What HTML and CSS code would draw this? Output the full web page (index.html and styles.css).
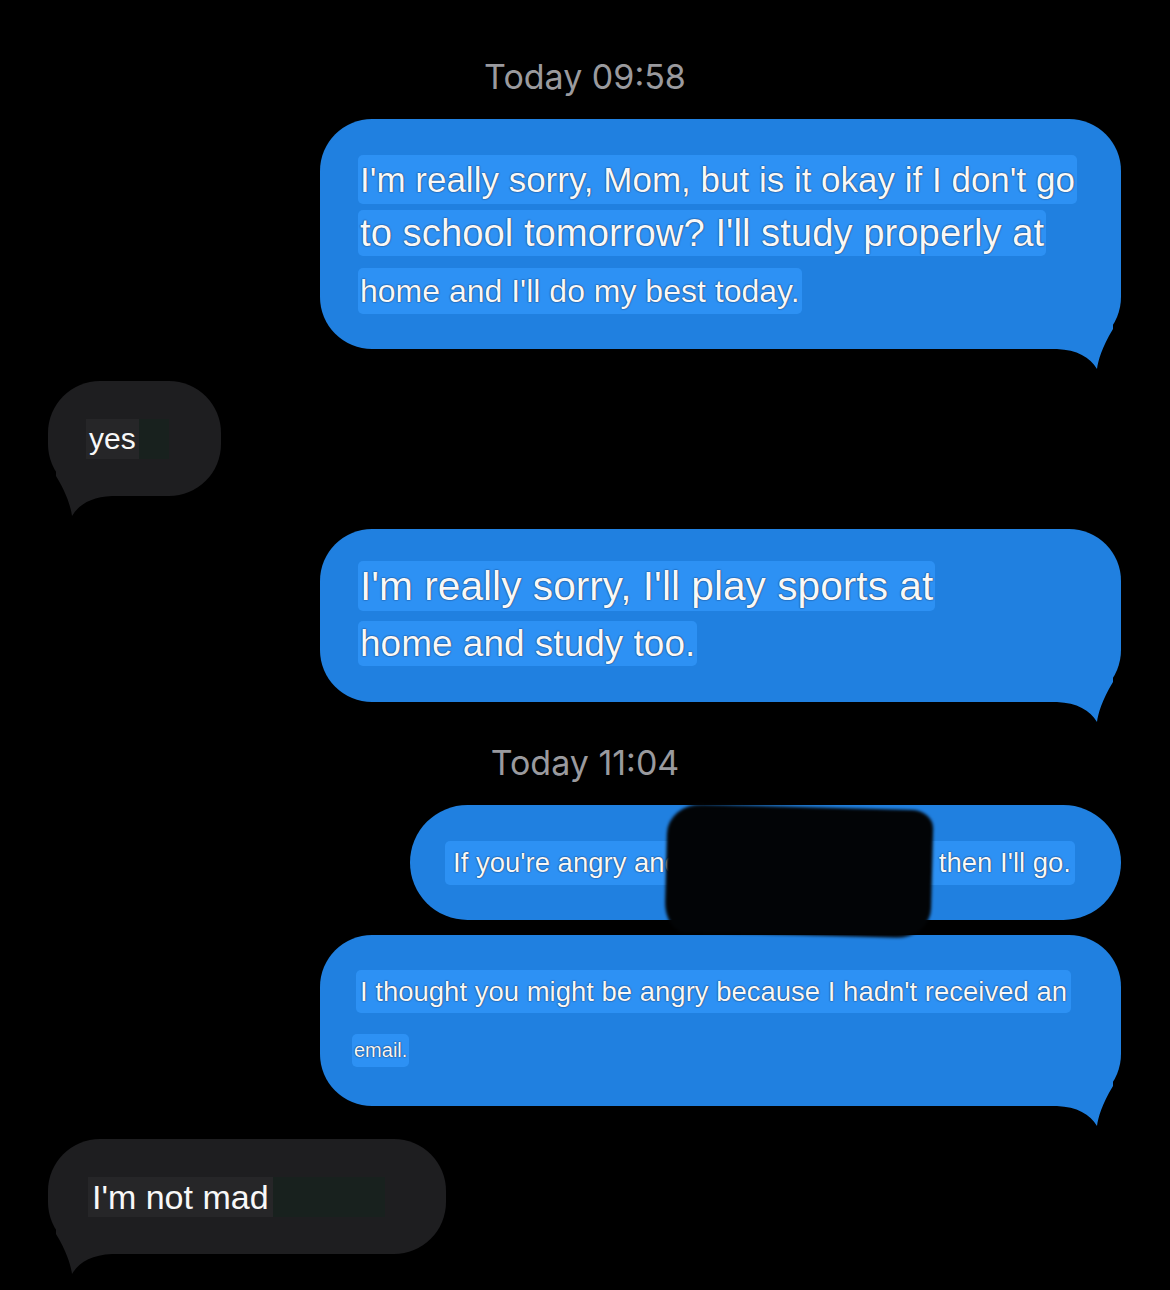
FILE: index.html
```html
<!DOCTYPE html>
<html lang="en">
<head>
    <meta charset="UTF-8">
    <meta name="viewport" content="width=device-width, initial-scale=1.0">
    <title>Messages</title>
    <link rel="stylesheet" href="styles.css">
</head>
<body>
    <div class="thread">
        <div class="stamp stamp-first">Today 09:58</div>

        <div class="row out">
            <div class="bubble blue tail b-first">
                <span class="hl l1">I'm really sorry, Mom, but is it okay if I don't go</span>
                <span class="hl l2">to school tomorrow? I'll study properly at</span>
                <span class="hl l3">home and I'll do my best today.</span>
            </div>
        </div>

        <div class="row in r-yes">
            <div class="bubble gray tail b-short">
                <span class="hl-dark">yes</span><span class="hl-ghost ghost-yes"></span>
            </div>
        </div>

        <div class="row out r-sports">
            <div class="bubble blue tail b-sports">
                <span class="hl s1">I'm really sorry, I'll play sports at</span>
                <span class="hl s2">home and study too.</span>
            </div>
        </div>

        <div class="stamp stamp-second">Today 11:04</div>

        <div class="row out r-angry">
            <div class="bubble blue b-angry">
                <span class="hl a1"><span>If you're angry and</span><span>, then I'll go.</span></span>
                <!-- redacted with a marker -->
                <div class="redact"></div>
            </div>
        </div>

        <div class="row out r-email">
            <div class="bubble blue tail b-email">
                <span class="hl e1">I thought you might be angry because I hadn't received an</span>
                <span class="hl e2">email.</span>
            </div>
        </div>

        <div class="row in r-mad">
            <div class="bubble gray tail b-mad">
                <span class="hl-dark mad">I'm not mad</span><span class="hl-ghost ghost-mad"></span>
            </div>
        </div>
    </div>
</body>
</html>
```

FILE: styles.css
```css
* {
    margin: 0;
    padding: 0;
    box-sizing: border-box;
}

body {
    background: #000;
    width: 1170px;
    height: 1290px;
    overflow: hidden;
    font-family: 'Liberation Sans', Arial, sans-serif;
    color: #f8f8f8;
}

.thread {
    display: flex;
    flex-direction: column;
}

/* horodatage */
.stamp {
    font-family: Inter, 'Liberation Sans', sans-serif;
    font-size: 34px;
    line-height: 40px;
    color: #9a9a9e;
    text-align: center;
}
.stamp-first { margin-top: 57px; }
.stamp-second { margin-top: 41px; }

.row {
    display: flex;
}
.row.out {
    justify-content: flex-end;
    padding-right: 49px;
}
.row.in {
    justify-content: flex-start;
    padding-left: 48px;
}

.bubble {
    position: relative;
    display: flex;
    flex-direction: column;
    align-items: flex-start;
    border-radius: 52px;
}
.blue { background: #2080e0; }
.gray { background: #1e1e20; }

/* queue de la bulle */
.out .tail::after {
    content: "";
    position: absolute;
    right: 0;
    bottom: -20px;
    width: 64px;
    height: 50px;
    background: inherit;
    clip-path: path('M0 0 L0 30 C20 31 33 38 40 50 C41 42 45 28 56 10 L56 0 Z');
}
.in .tail::after {
    content: "";
    position: absolute;
    left: 0;
    bottom: -20px;
    width: 64px;
    height: 50px;
    background: inherit;
    clip-path: path('M64 0 L64 30 C44 31 31 38 24 50 C23 42 19 28 8 10 L8 0 Z');
}

.hl {
    display: block;
    background: #2d91f4;
    border-radius: 5px;
    padding: 0 2px;
    white-space: nowrap;
    text-shadow: 0 0 1px rgba(0, 10, 40, 0.8), 0 0 2px rgba(0, 10, 40, 0.45);
}

/* premier message */
.b-first {
    width: 801px;
    height: 230px;
    margin-top: 22px;
    padding: 36px 0 0 38px;
}
.l1 { font-size: 35px; line-height: 49px; }
.l2 { font-size: 38.3px; line-height: 46px; margin-top: 6px; }
.l3 { font-size: 32px; line-height: 46px; margin-top: 12px; }

/* reponses de maman */
.b-short {
    width: 173px;
    height: 115px;
    flex-direction: row;
    align-items: center;
    padding-left: 38px;
}
.r-yes { margin-top: 32px; }

.hl-dark {
    font-size: 30px;
    line-height: 40px;
    background: #262628;
    padding: 0 3px;
}
.hl-ghost {
    display: block;
    height: 40px;
    background: #18211e;
}
.ghost-yes { width: 30px; }

.r-sports { margin-top: 33px; }
.b-sports {
    width: 801px;
    height: 173px;
    padding: 32px 0 0 38px;
}
.s1 { font-size: 40.7px; line-height: 50px; }
.s2 { font-size: 37px; line-height: 45px; margin-top: 10px; }

.r-angry { margin-top: 22px; }
.b-angry {
    width: 711px;
    height: 115px;
    border-radius: 58px;
    justify-content: center;
    padding-left: 35px;
}
.a1 {
    display: flex;
    justify-content: space-between;
    width: 630px;
    font-size: 27.5px;
    line-height: 44px;
    padding: 0 4px 0 8px;
}
.redact {
    position: absolute;
    left: 256px;
    top: 2px;
    width: 266px;
    height: 128px;
    background: #020406;
    border-radius: 34px 22px 34px 20px / 30px 18px 30px 30px;
    transform: rotate(1.5deg);
    filter: blur(1.5px);
    z-index: 2;
}

.r-email { margin-top: 15px; }
.b-email {
    width: 801px;
    height: 171px;
    padding: 35px 0 0 36px;
}
.e1 { font-size: 27.5px; line-height: 43px; padding: 0 4px; }
.e2 { font-size: 20px; line-height: 33px; margin-top: 21px; margin-left: -4px; }

.r-mad { margin-top: 33px; }
.b-mad {
    width: 398px;
    height: 115px;
    flex-direction: row;
    align-items: center;
    padding-left: 40px;
}
.mad { font-size: 34px; line-height: 40px; padding: 0 4px; }
.ghost-mad { width: 112px; height: 40px; }
```
